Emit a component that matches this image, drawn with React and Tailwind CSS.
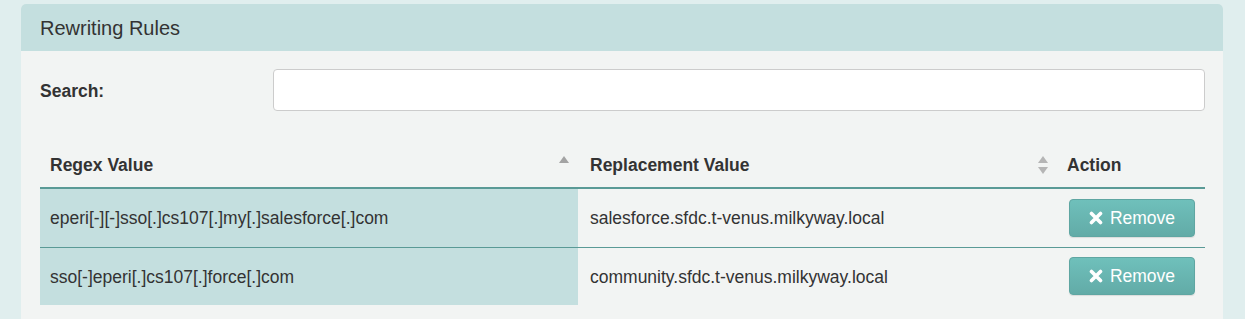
const rules = [
  { regex: 'eperi[-][-]sso[.]cs107[.]my[.]salesforce[.]com', replacement: 'salesforce.sfdc.t-venus.milkyway.local' },
  { regex: 'sso[-]eperi[.]cs107[.]force[.]com', replacement: 'community.sfdc.t-venus.milkyway.local' },
];

function RemoveIcon() {
  return (
    <svg width="14" height="14" viewBox="0 0 14 14" className="shrink-0">
      <path d="M2.5 2.5 L11.5 11.5 M11.5 2.5 L2.5 11.5" stroke="white" strokeWidth="3.6" strokeLinecap="round" />
    </svg>
  );
}

function SortUp() {
  return (
    <svg width="12" height="10" viewBox="0 0 12 10">
      <path d="M6 1 L11 8 L1 8 Z" fill="#a3a3a3" />
    </svg>
  );
}

function SortBoth() {
  return (
    <svg width="12" height="20" viewBox="0 0 12 20">
      <path d="M6 1 L11 8 L1 8 Z" fill="#b5b5b5" />
      <path d="M6 19 L11 12 L1 12 Z" fill="#b5b5b5" />
    </svg>
  );
}

export default function App() {
  return (
    <div className="min-h-[319px] bg-[#e0eeee] pt-1 px-[21px] pr-[22px] font-['Liberation_Sans',Arial,sans-serif] text-[#333]">
      <div className="bg-[#f2f4f3] rounded-t-[5px] min-h-[315px] overflow-hidden">
        <div className="h-[47px] bg-[#c4dfdf] flex items-center px-[19px] text-[20px] text-[#333]">
          Rewriting Rules
        </div>
        <div className="px-[19px] pr-[18px]">
          <div className="flex items-center mt-[18px] h-[42px]">
            <label className="w-[233px] font-bold text-[17.5px] pt-[2px]">Search:</label>
            <input className="flex-1 h-[42px] bg-white border border-[#cccccc] rounded-[4px] outline-none px-3" />
          </div>
          <table className="w-full mt-[29px] border-collapse text-[17.5px]">
            <thead>
              <tr className="h-[48px] border-b-2 border-[#5a9a96]">
                <th className="w-[538px] text-left font-bold pl-[10px] pr-[8px] pt-[3px]">
                  <div className="flex items-center justify-between">
                    <span>Regex Value</span>
                    <span className="-mt-[10px]"><SortUp /></span>
                  </div>
                </th>
                <th className="w-[479px] text-left font-bold pl-[12px] pr-[8px] pt-[3px]">
                  <div className="flex items-center justify-between">
                    <span>Replacement Value</span>
                    <SortBoth />
                  </div>
                </th>
                <th className="text-left font-bold pl-[10px] pt-[3px]">Action</th>
              </tr>
            </thead>
            <tbody>
              {rules.map((r, i) => (
                <tr key={i} className={i === 0 ? 'h-[59px] border-b border-[#5a9a96]' : 'h-[58px]'}>
                  <td className="bg-[#c4dfdf] pl-[10px] pt-[1px]">{r.regex}</td>
                  <td className="pl-[12px] pt-[1px]">{r.replacement}</td>
                  <td className="pl-[12px] pr-[9px]">
                    <button className="w-[126px] h-[38px] flex items-center justify-center gap-[7px] rounded-[4px] bg-gradient-to-b from-[#6fc0bb] to-[#62aba7] border border-[#5fa6a2] text-white text-[17.5px] shadow-[0_1px_1px_rgba(0,0,0,0.1)]">
                      <RemoveIcon />
                      <span>Remove</span>
                    </button>
                  </td>
                </tr>
              ))}
            </tbody>
          </table>
        </div>
      </div>
    </div>
  );
}
